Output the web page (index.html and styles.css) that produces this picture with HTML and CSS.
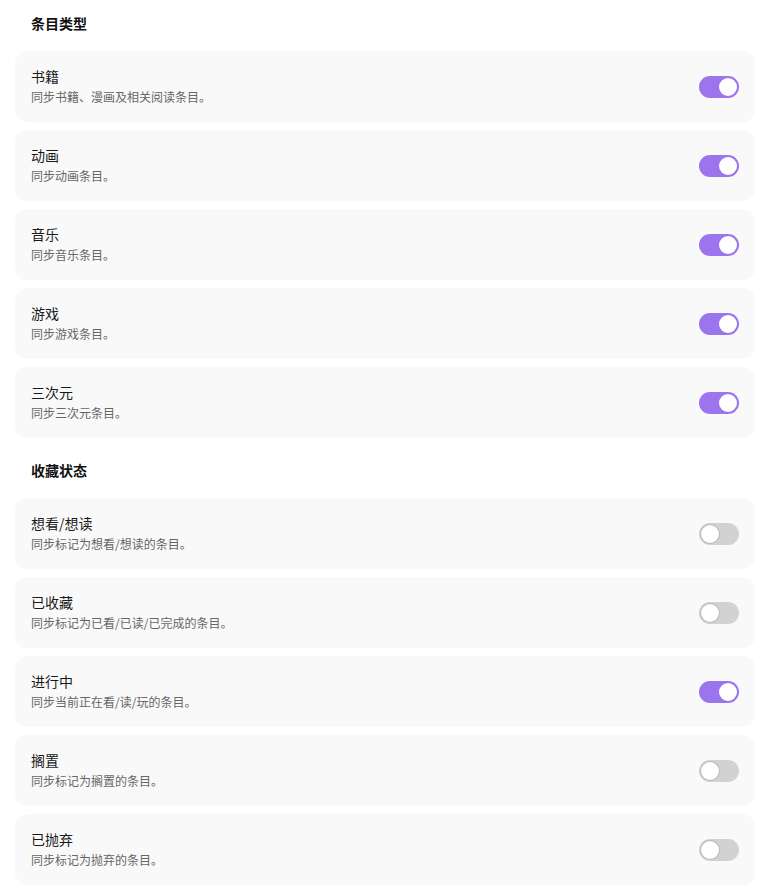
FILE: index.html
```html
<!DOCTYPE html>
<html lang="zh">
<head>
<meta charset="utf-8">
<link rel="stylesheet" href="styles.css">
</head>
<body>
<div class="page">
  <div class="section-title first">条目类型</div>
  <div class="list">
    <div class="card"><div class="text"><div class="title">书籍</div><div class="desc">同步书籍、漫画及相关阅读条目。</div></div><span class="toggle on"><span class="knob"></span></span></div>
    <div class="card"><div class="text"><div class="title">动画</div><div class="desc">同步动画条目。</div></div><span class="toggle on"><span class="knob"></span></span></div>
    <div class="card"><div class="text"><div class="title">音乐</div><div class="desc">同步音乐条目。</div></div><span class="toggle on"><span class="knob"></span></span></div>
    <div class="card"><div class="text"><div class="title">游戏</div><div class="desc">同步游戏条目。</div></div><span class="toggle on"><span class="knob"></span></span></div>
    <div class="card"><div class="text"><div class="title">三次元</div><div class="desc">同步三次元条目。</div></div><span class="toggle on"><span class="knob"></span></span></div>
  </div>
  <div class="section-title">收藏状态</div>
  <div class="list">
    <div class="card"><div class="text"><div class="title">想看/想读</div><div class="desc">同步标记为想看/想读的条目。</div></div><span class="toggle"><span class="knob"></span></span></div>
    <div class="card"><div class="text"><div class="title">已收藏</div><div class="desc">同步标记为已看/已读/已完成的条目。</div></div><span class="toggle"><span class="knob"></span></span></div>
    <div class="card"><div class="text"><div class="title">进行中</div><div class="desc">同步当前正在看/读/玩的条目。</div></div><span class="toggle on"><span class="knob"></span></span></div>
    <div class="card"><div class="text"><div class="title">搁置</div><div class="desc">同步标记为搁置的条目。</div></div><span class="toggle"><span class="knob"></span></span></div>
    <div class="card"><div class="text"><div class="title">已抛弃</div><div class="desc">同步标记为抛弃的条目。</div></div><span class="toggle"><span class="knob"></span></span></div>
  </div>
</div>
</body>
</html>
```

FILE: styles.css
```css
html, body {
  margin: 0;
  padding: 0;
  background: #ffffff;
}
body {
  font-family: "Noto Sans CJK SC", "Noto Sans", "Liberation Sans", sans-serif;
  color: #1a1a1a;
}
.page {
  padding: 13px 16px 0 15px;
}
.section-title {
  font-size: 14px;
  font-weight: 700;
  line-height: 20px;
  padding-left: 16px;
  margin: 22px 0 18px;
  color: #111;
}
.section-title.first {
  margin-top: 0;
}
.list {
  display: flex;
  flex-direction: column;
  gap: 8px;
}
.card {
  background: #f9f9f9;
  border-radius: 12px;
  height: 71px;
  box-sizing: border-box;
  padding: 0 16px;
  display: flex;
  align-items: center;
  justify-content: space-between;
}
.text {
  display: flex;
  flex-direction: column;
  gap: 2px;
  margin-top: -1px;
}
.title {
  font-size: 14px;
  line-height: 20px;
  color: #1a1a1a;
}
.desc {
  font-size: 12px;
  line-height: 18px;
  color: #666666;
}
.toggle {
  width: 40px;
  height: 22px;
  border-radius: 11px;
  background: #d2d2d2;
  position: relative;
  flex-shrink: 0;
}
.toggle.on {
  background: #9b74ee;
}
.knob {
  position: absolute;
  top: 2px;
  left: 2px;
  width: 18px;
  height: 18px;
  border-radius: 50%;
  background: #ffffff;
  box-shadow: 0 0 0 1px rgba(0,0,0,0.12);
}
.toggle.on .knob {
  left: 20px;
  box-shadow: none;
}
```
